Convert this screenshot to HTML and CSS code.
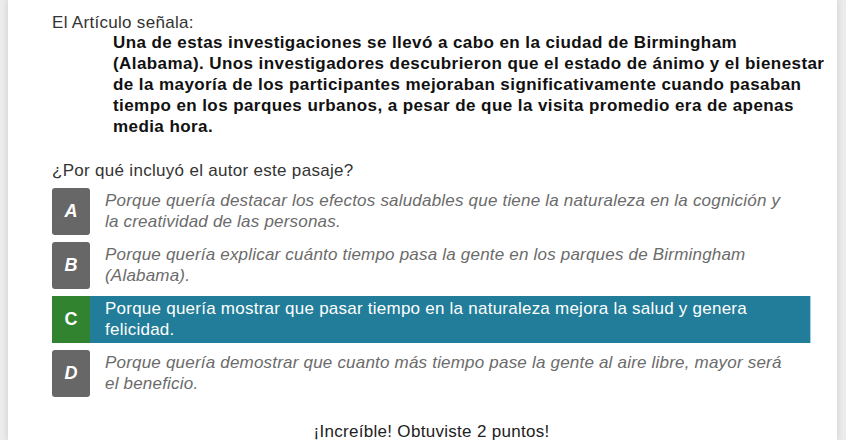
FILE: index.html
```html
<!DOCTYPE html>
<html lang="es">
<head>
<meta charset="utf-8">
<title>Pregunta</title>
<link rel="stylesheet" href="styles.css">
</head>
<body>
<div class="card">
  <p class="intro">El Artículo señala:</p>
  <p class="quote">Una de estas investigaciones se llevó a cabo en la ciudad de Birmingham<br>(Alabama). Unos investigadores descubrieron que el estado de ánimo y el bienestar<br>de la mayoría de los participantes mejoraban significativamente cuando pasaban<br>tiempo en los parques urbanos, a pesar de que la visita promedio era de apenas<br>media hora.</p>
  <p class="question">¿Por qué incluyó el autor este pasaje?</p>
  <ul class="options">
    <li class="option">
      <span class="letter">A</span>
      <span class="text">Porque quería destacar los efectos saludables que tiene la naturaleza en la cognición y la creatividad de las personas.</span>
    </li>
    <li class="option">
      <span class="letter">B</span>
      <span class="text">Porque quería explicar cuánto tiempo pasa la gente en los parques de Birmingham (Alabama).</span>
    </li>
    <li class="option selected">
      <span class="letter">C</span>
      <span class="text">Porque quería mostrar que pasar tiempo en la naturaleza mejora la salud y genera felicidad.</span>
    </li>
    <li class="option">
      <span class="letter">D</span>
      <span class="text">Porque quería demostrar que cuanto más tiempo pase la gente al aire libre, mayor será el beneficio.</span>
    </li>
  </ul>
  <p class="result">¡Increíble! Obtuviste 2 puntos!</p>
</div>
</body>
</html>
```
FILE: styles.css
```css
html, body {
  margin: 0;
  padding: 0;
}
body {
  background: #ececec;
  font-family: "Liberation Sans", Arial, sans-serif;
  font-size: 17px;
  letter-spacing: 0.3px;
  line-height: 20.8px;
  color: #333;
  height: 440px;
  overflow: hidden;
}
.card {
  margin: 0 9px 0 8px;
  background: #fff;
  box-shadow: 0 0 7px rgba(0, 0, 0, 0.14);
  padding: 12.6px 26px 0 44px;
  height: 440px;
  box-sizing: border-box;
  overflow: hidden;
}
p {
  margin: 0;
}
.intro {
  color: #333;
}
.quote {
  margin-left: 61px;
  font-weight: bold;
  font-size: 17px;
  letter-spacing: 0.42px;
  white-space: nowrap;
  color: #111;
}
.question {
  margin-top: 24px;
  color: #333;
}
.options {
  list-style: none;
  margin: 6px 0 0;
  padding: 0;
  display: flex;
  flex-direction: column;
  gap: 7px;
}
.option {
  display: flex;
  align-items: center;
  min-height: 47px;
}
.letter {
  flex: none;
  width: 38px;
  align-self: stretch;
  display: flex;
  align-items: center;
  justify-content: center;
  background: #676767;
  color: #fff;
  border-radius: 3px;
  font-weight: bold;
  font-style: italic;
  font-size: 18px;
  letter-spacing: 0;
}
.text {
  padding: 0 15px;
  font-style: italic;
  letter-spacing: 0.2px;
  color: #6b6b6b;
}
.option.selected {
  background: #217d99;
  border-right: 1px solid #9fd0de;
}
.option.selected .letter {
  background: #31832f;
  border-radius: 0;
  font-style: normal;
}
.option.selected .text {
  font-style: normal;
  letter-spacing: 0.24px;
  color: #fff;
}
.result {
  margin-top: 25px;
  text-align: center;
  color: #222;
}
```
